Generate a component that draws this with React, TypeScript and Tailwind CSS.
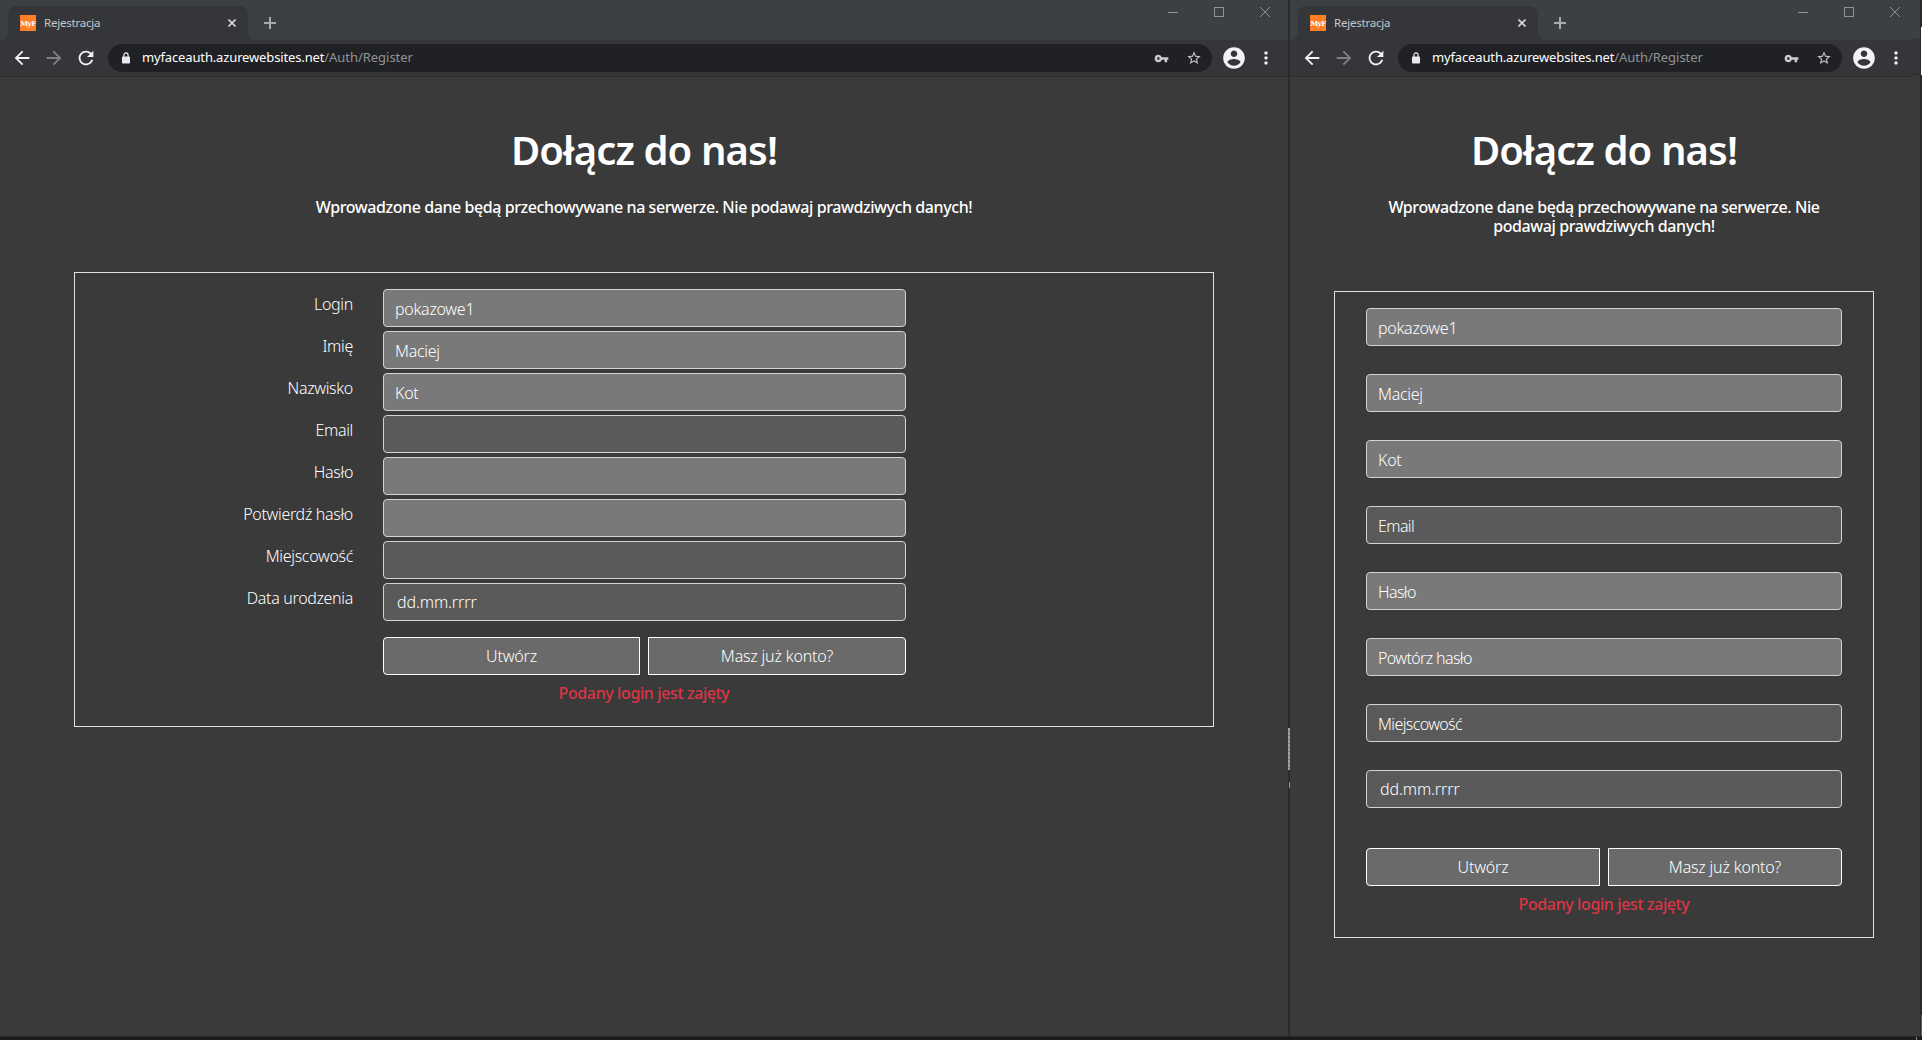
type Field = { label: string; placeholder: string; value: string; required: boolean; date?: boolean };

const FIELDS: Field[] = [
  { label: "Login", placeholder: "Login", value: "pokazowe1", required: true },
  { label: "Imię", placeholder: "Imię", value: "Maciej", required: true },
  { label: "Nazwisko", placeholder: "Nazwisko", value: "Kot", required: true },
  { label: "Email", placeholder: "Email", value: "", required: false },
  { label: "Hasło", placeholder: "Hasło", value: "", required: true },
  { label: "Potwierdź hasło", placeholder: "Powtórz hasło", value: "", required: true },
  { label: "Miejscowość", placeholder: "Miejscowość", value: "", required: false },
  { label: "Data urodzenia", placeholder: "dd.mm.rrrr", value: "dd.mm.rrrr", required: false, date: true },
];

function TabStrip() {
  return (
    <div className="flex h-10 shrink-0 bg-[#3c4043]">
      <div className="w-2 bg-[#35363a]">
        <div className="h-full w-2 rounded-br-lg bg-[#3c4043]" />
      </div>
      <div className="mt-1.5 flex w-60 items-center rounded-t-lg bg-[#35363a] pl-3">
        <div className="flex size-4 items-center justify-center bg-[#ff7f27] font-['DejaVu_Serif',serif] text-[7px] leading-4 font-bold tracking-[-0.5px] text-white">
          <span className="pt-px">MyF</span>
        </div>
        <span className="ml-[8px] text-[11.5px] tracking-[-0.22px] text-[#c6c8ca]">Rejestracja</span>
        <svg className="mr-[12px] ml-auto" width="8" height="8" viewBox="0 0 8 8" stroke="#d5d7da" strokeWidth="1.6">
          <path d="M0.5 0.5l7 7M7.5 0.5l-7 7" />
        </svg>
      </div>
      <div className="w-2 bg-[#35363a]">
        <div className="h-full w-2 rounded-bl-lg bg-[#3c4043]" />
      </div>
      <svg className="mt-[17px] ml-2" width="12" height="12" viewBox="0 0 12 12" stroke="#a9abad" strokeWidth="2">
        <path d="M6 0v12M0 6h12" />
      </svg>
      <div className="mt-[7px] mr-[18px] ml-auto flex gap-9 group-data-[wide=false]:mr-5">
        <svg width="10" height="10" viewBox="0 0 10 10" stroke="#8e9092">
          <path d="M0 5.5h10" />
        </svg>
        <svg width="10" height="10" viewBox="0 0 10 10" stroke="#8e9092" fill="none">
          <rect x="0.5" y="0.5" width="9" height="9" />
        </svg>
        <svg width="10" height="10" viewBox="0 0 10 10" stroke="#8e9092">
          <path d="M0 0l10 10M10 0L0 10" />
        </svg>
      </div>
    </div>
  );
}

function Toolbar() {
  return (
    <div className="flex h-9 shrink-0 items-center bg-[#35363a] pr-5 pl-[11px] group-data-[wide=false]:pr-[22px]">
      <svg width="22" height="22" viewBox="0 0 24 24" fill="#f1f3f4">
        <path d="M20 11H7.83l5.59-5.59L12 4l-8 8 8 8 1.41-1.41L7.83 13H20v-2z" />
      </svg>
      <svg className="ml-[10px]" width="22" height="22" viewBox="0 0 24 24" fill="#808184">
        <path d="M12 4l-1.41 1.41L16.17 11H4v2h12.17l-5.58 5.59L12 20l8-8z" />
      </svg>
      <svg className="ml-[10px]" width="22" height="22" viewBox="0 0 24 24" fill="#f1f3f4">
        <path d="M17.65 6.35C16.2 4.9 14.21 4 12 4c-4.42 0-7.99 3.58-7.99 8s3.57 8 7.99 8c3.73 0 6.84-2.55 7.73-6h-2.08c-.82 2.33-3.04 4-5.65 4-3.31 0-6-2.69-6-6s2.69-6 6-6c1.66 0 3.14.69 4.22 1.78L13 11h7V4l-2.35 2.35z" />
      </svg>
      <div className="ml-[11px] flex h-7 flex-1 items-center rounded-full bg-[#202124] pr-[10px] pl-[14px]">
        <svg width="8" height="12" viewBox="0 0 8 12">
          <rect x="0" y="4.5" width="8" height="7" rx="0.8" fill="#e8eaed" />
          <path d="M1.9 5V3.2a2.1 2.3 0 0 1 4.2 0V5" fill="none" stroke="#e8eaed" strokeWidth="1.2" />
        </svg>
        <span className="ml-[12px] text-[13px] tracking-[-0.14px] whitespace-nowrap text-white">
          myfaceauth.azurewebsites.net
          <span className="tracking-[-0.04px] text-[#919396]">/Auth/Register</span>
        </span>
        <svg className="ml-auto" width="15" height="15" viewBox="0 0 24 24" fill="#c9cbce">
          <path d="M12.65 10A5.99 5.99 0 0 0 7 6c-3.31 0-6 2.69-6 6s2.69 6 6 6a5.99 5.99 0 0 0 5.65-4H17v4h4v-4h2v-4H12.65zM7 14c-1.1 0-2-.9-2-2s.9-2 2-2 2 .9 2 2-.9 2-2 2z" />
        </svg>
        <svg className="ml-[17px]" width="16" height="16" viewBox="0 0 24 24" fill="#c9cbce">
          <path d="M22 9.24l-7.19-.62L12 2 9.19 8.63 2 9.24l5.46 4.73L5.82 21 12 17.27 18.18 21l-1.63-7.03L22 9.24zM12 15.4l-3.76 2.27 1-4.28-3.32-2.88 4.38-.38L12 6.1l1.71 4.04 4.38.38-3.32 2.88 1 4.28L12 15.4z" />
        </svg>
      </div>
      <svg className="ml-[9px]" width="26" height="26" viewBox="0 0 24 24" fill="#f1f3f4">
        <path d="M12 2C6.48 2 2 6.48 2 12s4.48 10 10 10 10-4.48 10-10S17.52 2 12 2zm0 3c1.66 0 3 1.34 3 3s-1.34 3-3 3-3-1.34-3-3 1.34-3 3-3zm0 14.2c-2.5 0-4.71-1.28-6-3.22.03-1.99 4-3.08 6-3.08 1.99 0 5.97 1.09 6 3.08-1.29 1.94-3.5 3.22-6 3.22z" />
      </svg>
      <svg className="ml-[17px]" width="4" height="14" viewBox="0 0 4 14" fill="#f1f3f4">
        <rect x="0.5" y="0.5" width="3" height="3" rx="0.8" />
        <rect x="0.5" y="5.5" width="3" height="3" rx="0.8" />
        <rect x="0.5" y="10.5" width="3" height="3" rx="0.8" />
      </svg>
    </div>
  );
}

function Box({ field, text }: { field: Field; text: string }) {
  const spacing = field.date
    ? "pl-[13px] tracking-[-0.12px]"
    : field.value
      ? "pl-[11px] pt-[2px] tracking-[-0.28px]"
      : "pl-[11px] pt-[2px] tracking-[-0.62px]";
  return (
    <div
      className={
        "flex h-[38px] items-center rounded border border-[#ced4da] text-base font-light text-white " +
        (field.required ? "bg-[#797979] " : "bg-[#5a5a5a] ") +
        spacing
      }
    >
      {text}
    </div>
  );
}

function Buttons() {
  return (
    <div className="flex gap-2 text-base font-light tracking-[-0.18px] text-white">
      <button className="h-[38px] flex-1 rounded-l border border-white bg-[#6a6a6a] group-data-[wide=true]:w-[257px] group-data-[wide=true]:flex-none">
        Utwórz
      </button>
      <button className="h-[38px] flex-1 rounded-r border border-white bg-[#6a6a6a]">Masz już konto?</button>
    </div>
  );
}

function Heading() {
  return (
    <>
      <h1 className="mt-[49px] text-center text-[40px] leading-[48px] font-semibold tracking-[-0.88px] text-white">
        Dołącz do nas!
      </h1>
      <p className="mx-auto mt-6 mb-[55px] max-w-[480px] text-center text-base leading-[19px] font-medium tracking-[-0.42px] text-white group-data-[wide=true]:max-w-none">
        Wprowadzone dane będą przechowywane na serwerze. Nie podawaj prawdziwych danych!
      </p>
    </>
  );
}

function ErrorText() {
  return (
    <p className="mt-2 text-center text-base leading-5 font-medium tracking-[-0.39px] text-[#dc3545]">
      Podany login jest zajęty
    </p>
  );
}

function WideForm() {
  return (
    <div className="mx-auto h-[455px] w-[1140px] border border-[#dee2e6] pt-4">
      <div className="grid grid-cols-[278px_523px] gap-x-[30px] gap-y-1">
        {FIELDS.map((f) => (
          <div key={f.label} className="contents">
            <label className="flex h-[30px] items-center justify-end text-base font-light tracking-[-0.32px] text-white">
              {f.label}
            </label>
            <Box field={f} text={f.value} />
          </div>
        ))}
      </div>
      <div className="mt-4 ml-[308px] w-[523px]">
        <Buttons />
      </div>
      <ErrorText />
    </div>
  );
}

function NarrowForm() {
  return (
    <div className="ml-11 h-[647px] w-[540px] border border-[#dee2e6] px-[31px] pt-4">
      <div className="flex flex-col gap-7">
        {FIELDS.map((f) => (
          <Box key={f.label} field={f} text={f.value || f.placeholder} />
        ))}
      </div>
      <div className="mt-10">
        <Buttons />
      </div>
      <ErrorText />
    </div>
  );
}

export default function App() {
  return (
    <div className="flex h-[1040px] w-[1922px] flex-col overflow-hidden bg-[#1c1b1c] font-['Noto_Sans','Open_Sans',sans-serif]">
      <div className="flex h-[1036px]">
        <section data-wide="true" className="group flex w-[1288px] shrink-0 flex-col bg-[#3a3a3a]">
          <TabStrip />
          <Toolbar />
          <div className="h-px bg-[#2b2b2c]" />
          <Heading />
          <WideForm />
        </section>
        <div className="flex w-0.5 shrink-0 flex-col bg-[#2b2b2b] pt-[728px]">
          <div className="h-[42px] bg-[repeating-linear-gradient(#a0a0a0_0_3px,#858585_3px_4px)]" />
          <div className="mt-3 ml-auto h-1.5 w-px bg-[#9a9a9a]" />
        </div>
        <section data-wide="false" className="group relative flex w-[630px] shrink-0 flex-col bg-[#3a3a3a]">
          <TabStrip />
          <Toolbar />
          <div className="h-px w-[623px] bg-[#2b2b2c]" />
          <div className="mr-[2px]">
            <Heading />
          </div>
          <NarrowForm />
          <div className="absolute top-[38px] right-0 h-9 w-[7px] bg-[#35363a]" />
          <div className="absolute top-[74px] right-0 h-[3px] w-[7px] border-t border-[#2b2b2c] bg-[#3a3a3a]" />
        </section>
        <div className="flex w-0.5 shrink-0 flex-col bg-[#282828] pt-[27px]">
          <div className="ml-auto h-12 w-px bg-white" />
          <div className="mt-auto ml-auto h-[21px] w-px bg-[#1f6fa8]" />
        </div>
      </div>
      <div className="flex h-1 flex-col border-t border-[#282828]">
        <div className="ml-[1916px] h-full w-px bg-[#8a8a8a]" />
      </div>
    </div>
  );
}
